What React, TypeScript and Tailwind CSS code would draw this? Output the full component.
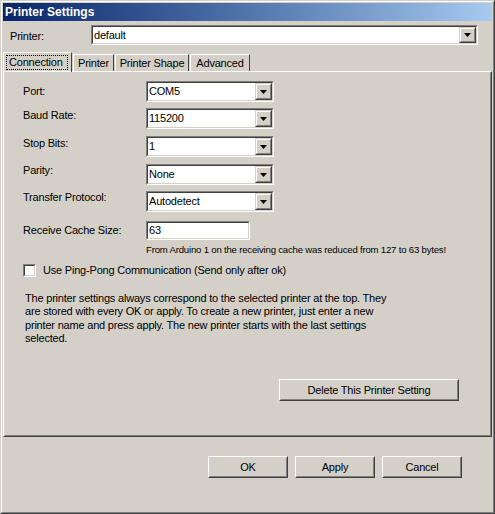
const face = "bg-[#d4d0c8]";

const Sunken = ({ className = "", children }: { className?: string; children?: React.ReactNode }) => (
  <div className={`border border-t-[#808080] border-l-[#808080] border-b-white border-r-white ${className}`}>
    <div className="h-full border border-t-[#404040] border-l-[#404040] border-b-[#d4d0c8] border-r-[#d4d0c8] bg-white">
      {children}
    </div>
  </div>
);

const Raised = ({ className = "", children }: { className?: string; children?: React.ReactNode }) => (
  <div className={`border border-t-[#d4d0c8] border-l-[#d4d0c8] border-b-[#404040] border-r-[#404040] ${className}`}>
    <div className={`h-full border border-t-white border-l-white border-b-[#808080] border-r-[#808080] ${face} flex items-center justify-center`}>
      {children}
    </div>
  </div>
);

const Arrow = () => (
  <Raised className="w-[17px] h-full shrink-0">
    <svg width="7" height="4" viewBox="0 0 7 4">
      <path d="M0 0h7L3.5 4z" fill="#000" />
    </svg>
  </Raised>
);

const Combo = ({ value, width }: { value: string; width: string }) => (
  <Sunken className={`${width} h-[21px]`}>
    <div className="flex h-full">
      <div className="flex-1 pl-[1px] leading-[17px]">{value}</div>
      <Arrow />
    </div>
  </Sunken>
);

const Button = ({ label, width }: { label: string; width: string }) => (
  <div className={`${width} h-[22px] border border-t-white border-l-white border-b-[#404040] border-r-[#404040]`}>
    <div className={`h-full border border-t-[#d4d0c8] border-l-[#d4d0c8] border-b-[#808080] border-r-[#808080] ${face} flex items-center justify-center`}>
      {label}
    </div>
  </div>
);

// margins tuned per row: the combos step 27/28px, the labels sit a little higher on lower rows
const rows = [
  { label: "Port:", value: "COM5", mt: "mt-0", lp: "mt-[2px]" },
  { label: "Baud Rate:", value: "115200", mt: "mt-[6px]", lp: "-mt-[1px]" },
  { label: "Stop Bits:", value: "1", mt: "mt-[7px]", lp: "-mt-[1px]" },
  { label: "Parity:", value: "None", mt: "mt-[7px]", lp: "-mt-[2px]" },
  { label: "Transfer Protocol:", value: "Autodetect", mt: "mt-[6px]", lp: "-mt-[2px]" },
];

const tabs = [
  { label: "Printer", w: "w-[41px]" },
  { label: "Printer Shape", w: "w-[74px]" },
  { label: "Advanced", w: "w-[60px]" },
];

export default function App() {
  return (
    <div
      className={`w-[495px] h-[514px] ${face} border border-t-[#d4d0c8] border-l-[#d4d0c8] border-b-[#404040] border-r-[#404040] text-[11px] tracking-[-0.2px] text-black`}
      style={{ fontFamily: "Tahoma, 'Liberation Sans', Arial, sans-serif" }}
    >
      <div className="h-full border border-t-white border-l-white border-b-[#808080] border-r-[#808080] p-[1px] flex flex-col">
        {/* title bar */}
        <div className="h-[18px] bg-gradient-to-r from-[#0a246a] to-[#a6caf0] text-white font-bold text-[12px] tracking-normal leading-[18px] pl-[2px]">
          Printer Settings
        </div>

        {/* printer selector */}
        <div className="flex items-center mt-[4px]">
          <div className="w-[88px] pl-[7px] pt-[3px]">Printer:</div>
          <Sunken className="w-[387px] h-[20px]">
            <div className="flex h-full">
              <div className="flex-1 pl-[1px] leading-[16px]">default</div>
              <Arrow />
            </div>
          </Sunken>
        </div>

        {/* tabs */}
        <div className="flex items-end mt-[7px] h-[19px]">
          <div className="relative z-10 w-[69px] h-[20px] -mb-[1px] border-t border-l border-t-white border-l-white border-r border-r-[#404040] pl-[2px] pt-[2px]">
            <div className="w-[62px] border border-dotted border-black pl-[2px] leading-[13px]">Connection</div>
          </div>
          {tabs.map((t) => (
            <div
              key={t.label}
              className={`${t.w} h-[17px] border-t border-l border-t-white border-l-white border-r border-r-[#404040] text-center leading-[16px] ml-[1px]`}
            >
              {t.label}
            </div>
          ))}
        </div>

        {/* tab panel */}
        <div className="h-[366px] border border-t-white border-l-white border-b-[#404040] border-r-[#404040]">
          <div className="h-full border border-t-transparent border-l-transparent border-b-[#808080] border-r-[#808080] pl-[18px] pr-[4px] pt-[8px] flex flex-col">
            <div className="flex flex-col">
              {rows.map((r) => (
                <div key={r.label} className={`flex items-start h-[21px] ${r.mt}`}>
                  <div className={`w-[123px] leading-[16px] ${r.lp}`}>{r.label}</div>
                  <Combo value={r.value} width="w-[128px]" />
                </div>
              ))}
            </div>

            <div className="flex items-start mt-[9px] h-[19px]">
              <div className="w-[123px] leading-[16px] pt-[1px]">Receive Cache Size:</div>
              <Sunken className="w-[104px] h-[19px]">
                <div className="pl-[1px] leading-[15px]">63</div>
              </Sunken>
            </div>
            <div className="pl-[123px] mt-[4px] text-[9.6px] leading-[12px]">
              From Arduino 1 on the receiving cache was reduced from 127 to 63 bytes!
            </div>

            <div className="flex items-center mt-[8px] h-[13px]">
              <Sunken className="w-[13px] h-[13px]" />
              <div className="ml-[7px]">Use Ping-Pong Communication (Send only after ok)</div>
            </div>

            <p className="mt-[15px] ml-[2px] w-[370px] leading-[13.3px]">
              The printer settings always correspond to the selected printer at the top. They are stored with every OK
              or apply. To create a new printer, just enter a new printer name and press apply. The new printer starts
              with the last settings selected.
            </p>

            <div className="flex justify-end mt-[34px] pr-[27px]">
              <Button label="Delete This Printer Setting" width="w-[180px]" />
            </div>
          </div>
        </div>

        {/* dialog buttons */}
        <div className="flex gap-[7px] pl-[205px] mt-[19px]">
          <Button label="OK" width="w-[80px]" />
          <Button label="Apply" width="w-[80px]" />
          <Button label="Cancel" width="w-[80px]" />
        </div>
      </div>
    </div>
  );
}
